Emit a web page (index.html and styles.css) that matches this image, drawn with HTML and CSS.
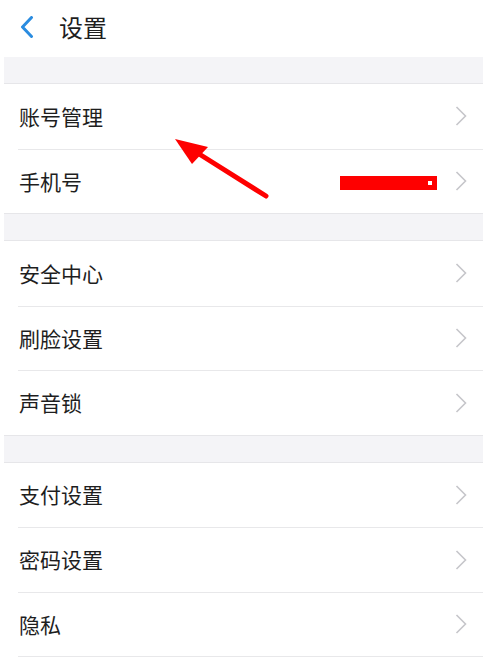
FILE: index.html
```html
<!DOCTYPE html>
<html lang="zh-CN">
<head>
<meta charset="utf-8">
<title>设置</title>
<link rel="stylesheet" href="styles.css">
</head>
<body>
<div class="page">
  <header class="header">
    <svg class="back" width="14" height="22" viewBox="0 0 14 22"><path d="M11.5 1.5 L2.5 11 L11.5 20.5" fill="none" stroke="#2a8ce0" stroke-width="3" stroke-linecap="round" stroke-linejoin="round"/></svg>
    <span class="title">设置</span>
  </header>
  <div class="band band-first"></div>
  <section class="group">
    <div class="row"><div class="inner"><span class="label">账号管理</span><span class="chev"><svg width="12" height="20" viewBox="0 0 12 20"><path d="M1.5 1 L10.5 10 L1.5 19" fill="none" stroke="#c6c6ca" stroke-width="1.6"/></svg></span></div></div>
    <div class="row"><div class="inner"><span class="label">手机号</span><span class="value"><span class="redact"><span class="dot"></span></span></span><span class="chev"><svg width="12" height="20" viewBox="0 0 12 20"><path d="M1.5 1 L10.5 10 L1.5 19" fill="none" stroke="#c6c6ca" stroke-width="1.6"/></svg></span></div></div>
  </section>
  <div class="band"></div>
  <section class="group">
    <div class="row"><div class="inner"><span class="label">安全中心</span><span class="chev"><svg width="12" height="20" viewBox="0 0 12 20"><path d="M1.5 1 L10.5 10 L1.5 19" fill="none" stroke="#c6c6ca" stroke-width="1.6"/></svg></span></div></div>
    <div class="row"><div class="inner"><span class="label">刷脸设置</span><span class="chev"><svg width="12" height="20" viewBox="0 0 12 20"><path d="M1.5 1 L10.5 10 L1.5 19" fill="none" stroke="#c6c6ca" stroke-width="1.6"/></svg></span></div></div>
    <div class="row"><div class="inner"><span class="label">声音锁</span><span class="chev"><svg width="12" height="20" viewBox="0 0 12 20"><path d="M1.5 1 L10.5 10 L1.5 19" fill="none" stroke="#c6c6ca" stroke-width="1.6"/></svg></span></div></div>
  </section>
  <div class="band"></div>
  <section class="group group-tail">
    <div class="row"><div class="inner"><span class="label">支付设置</span><span class="chev"><svg width="12" height="20" viewBox="0 0 12 20"><path d="M1.5 1 L10.5 10 L1.5 19" fill="none" stroke="#c6c6ca" stroke-width="1.6"/></svg></span></div></div>
    <div class="row"><div class="inner"><span class="label">密码设置</span><span class="chev"><svg width="12" height="20" viewBox="0 0 12 20"><path d="M1.5 1 L10.5 10 L1.5 19" fill="none" stroke="#c6c6ca" stroke-width="1.6"/></svg></span></div></div>
    <div class="row"><div class="inner"><span class="label">隐私</span><span class="chev"><svg width="12" height="20" viewBox="0 0 12 20"><path d="M1.5 1 L10.5 10 L1.5 19" fill="none" stroke="#c6c6ca" stroke-width="1.6"/></svg></span></div></div>
  </section>
  <svg class="arrow" width="483" height="659" viewBox="0 0 483 659">
    <line x1="266" y1="196" x2="196" y2="152" stroke="#fe0000" stroke-width="5" stroke-linecap="round"/>
    <polygon points="175,139 208,147 192,164" fill="#fe0000"/>
  </svg>
</div>
</body>
</html>
```

FILE: styles.css
```css
html, body {
  margin: 0;
  padding: 0;
  background: #ffffff;
}

.page {
  position: relative;
  width: 483px;
  height: 659px;
  overflow: hidden;
  font-family: "Noto Sans CJK SC", "Noto Sans", sans-serif;
  color: #1e1e1e;
}

.header {
  height: 57px;
  display: flex;
  align-items: center;
  box-sizing: border-box;
  padding-left: 20px;
  padding-bottom: 4px;
}

.back {
  display: block;
}

.title {
  margin-left: 25px;
  font-size: 24px;
  line-height: 1;
}

.band {
  height: 28px;
  box-sizing: border-box;
  margin-left: 4px;
  background: #f4f4f7;
  border-top: 1px solid #e6e6e9;
  border-bottom: 1px solid #e6e6e9;
}

.band-first {
  height: 27px;
  border-top: none;
}

.row {
  height: 64.5px;
  padding-left: 18px;
  box-sizing: border-box;
}

.inner {
  height: 100%;
  box-sizing: border-box;
  display: flex;
  align-items: center;
  padding-left: 1px;
  padding-right: 16px;
}

.row + .row .inner {
  border-top: 1px solid #e8e8ea;
}

.group-tail {
  border-bottom: 1px solid #e8e8ea;
  margin-left: 18px;
}

.group-tail .row {
  padding-left: 0;
}

.label {
  flex: 1;
  font-size: 21px;
  line-height: 1;
}

.value {
  display: flex;
  align-items: center;
  margin-right: 18px;
}

.redact {
  position: relative;
  display: block;
  width: 97px;
  height: 14px;
  background: #fe0000;
  margin-top: 3px;
}

.dot {
  position: absolute;
  right: 5px;
  top: 5px;
  width: 4px;
  height: 4px;
  background: #ffffff;
}

.chev {
  display: flex;
  align-items: center;
}

.chev svg {
  display: block;
}

.arrow {
  position: absolute;
  left: 0;
  top: 0;
  pointer-events: none;
}
```
